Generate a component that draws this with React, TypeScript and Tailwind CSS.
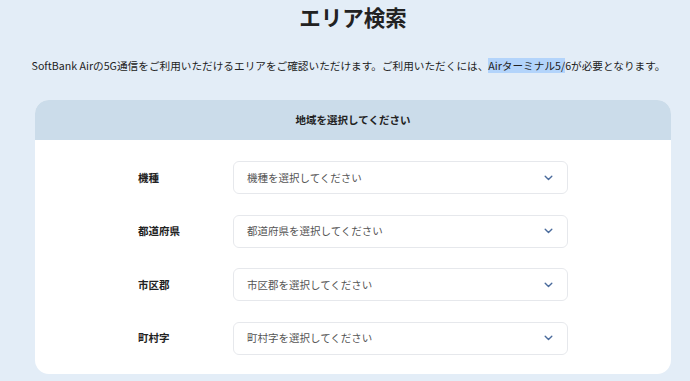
import React from "react";

const font = { fontFamily: '"Noto Sans CJK JP", "Noto Sans", sans-serif' };

function Chevron() {
  return (
    <svg width="9" height="6" viewBox="0 0 9 6" fill="none">
      <path d="M1.2 1.2 L4.5 4.4 L7.8 1.2" stroke="#4a6b9c" strokeWidth="1.4" strokeLinecap="round" strokeLinejoin="round" />
    </svg>
  );
}

function Row({ label, placeholder }: { label: string; placeholder: string }) {
  return (
    <div className="flex items-center">
      <div className="w-[95px] text-[10.5px] font-bold text-[#222]">{label}</div>
      <div className="flex h-[33px] w-[335px] items-center justify-between rounded-[6px] border border-[#e6e8ec] bg-white pl-[13px] pr-[14px]">
        <span className="text-[10.5px] text-[#555]">{placeholder}</span>
        <Chevron />
      </div>
    </div>
  );
}

export default function App() {
  return (
    <div className="h-[381px] w-[690px] overflow-hidden bg-[#e3edf7]" style={font}>
      <div className="w-[706px]">
        <div className="pt-[2px] text-center text-[21.5px] font-bold leading-[30px] text-[#222]">エリア検索</div>
      </div>
      <p className="mt-[26px] w-[697px] whitespace-nowrap text-center text-[10.65px] leading-[16px] text-[#222]">
        SoftBank Airの5G通信をご利用いただけるエリアをご確認いただけます。ご利用いただくには、
        <span className="bg-[#b3d4fb]">Airターミナル5/</span>6が必要となります。
      </p>
      <div className="ml-[35px] mt-[26px] w-[636px] overflow-hidden rounded-[14px] bg-white">
        <div className="flex h-[40px] items-center justify-center bg-[#cbdcea] text-[10.5px] font-bold text-[#222]">
          地域を選択してください
        </div>
        <div className="flex flex-col items-center gap-[20.5px] pb-[19px] pt-[21px]">
          <Row label="機種" placeholder="機種を選択してください" />
          <Row label="都道府県" placeholder="都道府県を選択してください" />
          <Row label="市区郡" placeholder="市区郡を選択してください" />
          <Row label="町村字" placeholder="町村字を選択してください" />
        </div>
      </div>
    </div>
  );
}
